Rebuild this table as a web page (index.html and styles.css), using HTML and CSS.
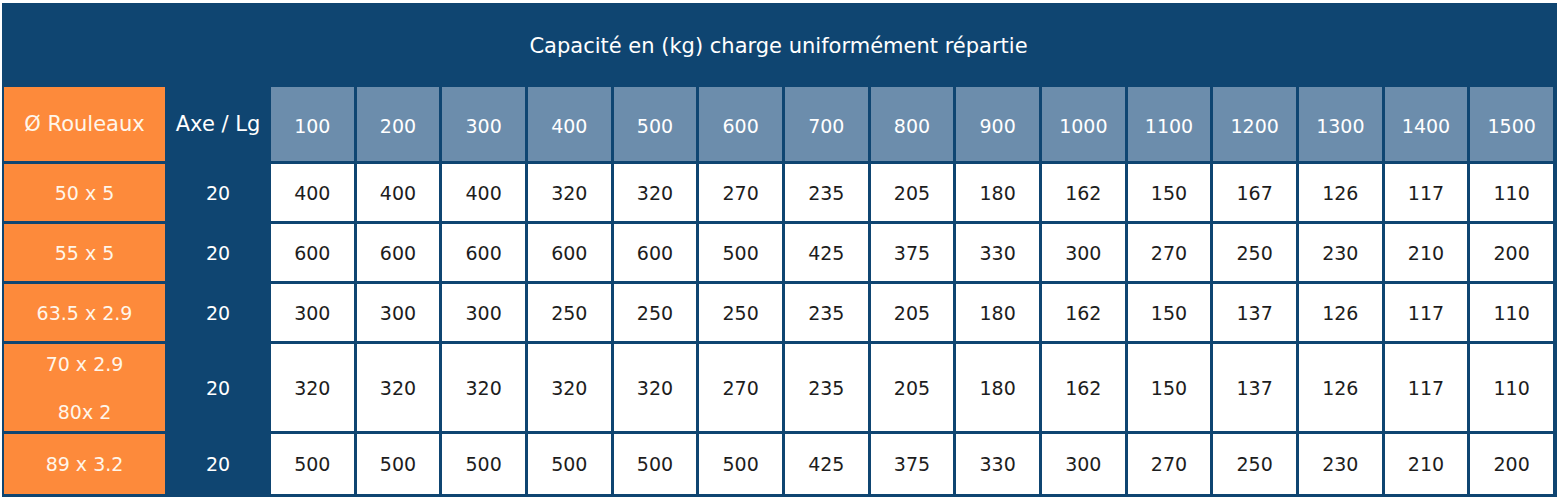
FILE: index.html
```html
<!DOCTYPE html>
<html lang="fr">
<head>
<meta charset="utf-8">
<title>Capacité</title>
<link rel="stylesheet" href="styles.css">
</head>
<body>
<div class="grid">
  <div class="title">Capacité en (kg) charge uniformément répartie</div>

  <div class="c or label">Ø Rouleaux</div><div class="c axe label">Axe / Lg</div>
  <div class="c hd">100</div><div class="c hd">200</div><div class="c hd">300</div><div class="c hd">400</div><div class="c hd">500</div><div class="c hd">600</div><div class="c hd">700</div><div class="c hd">800</div><div class="c hd">900</div><div class="c hd">1000</div><div class="c hd">1100</div><div class="c hd">1200</div><div class="c hd">1300</div><div class="c hd">1400</div><div class="c hd">1500</div>

  <div class="c or">50 x 5</div><div class="c axe">20</div>
  <div class="c v">400</div><div class="c v">400</div><div class="c v">400</div><div class="c v">320</div><div class="c v">320</div><div class="c v">270</div><div class="c v">235</div><div class="c v">205</div><div class="c v">180</div><div class="c v">162</div><div class="c v">150</div><div class="c v">167</div><div class="c v">126</div><div class="c v">117</div><div class="c v">110</div>

  <div class="c or">55 x 5</div><div class="c axe">20</div>
  <div class="c v">600</div><div class="c v">600</div><div class="c v">600</div><div class="c v">600</div><div class="c v">600</div><div class="c v">500</div><div class="c v">425</div><div class="c v">375</div><div class="c v">330</div><div class="c v">300</div><div class="c v">270</div><div class="c v">250</div><div class="c v">230</div><div class="c v">210</div><div class="c v">200</div>

  <div class="c or">63.5 x 2.9</div><div class="c axe">20</div>
  <div class="c v">300</div><div class="c v">300</div><div class="c v">300</div><div class="c v">250</div><div class="c v">250</div><div class="c v">250</div><div class="c v">235</div><div class="c v">205</div><div class="c v">180</div><div class="c v">162</div><div class="c v">150</div><div class="c v">137</div><div class="c v">126</div><div class="c v">117</div><div class="c v">110</div>

  <div class="c or two"><span>70 x 2.9</span><span>80x 2</span></div><div class="c axe">20</div>
  <div class="c v">320</div><div class="c v">320</div><div class="c v">320</div><div class="c v">320</div><div class="c v">320</div><div class="c v">270</div><div class="c v">235</div><div class="c v">205</div><div class="c v">180</div><div class="c v">162</div><div class="c v">150</div><div class="c v">137</div><div class="c v">126</div><div class="c v">117</div><div class="c v">110</div>

  <div class="c or">89 x 3.2</div><div class="c axe">20</div>
  <div class="c v">500</div><div class="c v">500</div><div class="c v">500</div><div class="c v">500</div><div class="c v">500</div><div class="c v">500</div><div class="c v">425</div><div class="c v">375</div><div class="c v">330</div><div class="c v">300</div><div class="c v">270</div><div class="c v">250</div><div class="c v">230</div><div class="c v">210</div><div class="c v">200</div>
</div>
</body>
</html>
```

FILE: styles.css
```css
html, body {
  margin: 0;
  padding: 0;
  background: #ffffff;
}
body {
  font-family: "DejaVu Sans", "Liberation Sans", sans-serif;
  font-size: 19px;
}
.grid {
  margin: 3px 0 0 2px;
  width: 1555px;
  box-sizing: border-box;
  padding: 0 4px 3px 2px;
  background: #0f4571;
  display: grid;
  grid-template-columns: 161px 100px repeat(15, 1fr);
  grid-template-rows: 81px 74px 57px 57px 57px 87px 60px;
  gap: 3px;
}
.title {
  grid-column: 1 / -1;
  color: #ffffff;
  font-size: 21px;
  display: flex;
  align-items: center;
  justify-content: center;
  padding-top: 5px;
}
.c {
  display: flex;
  align-items: center;
  justify-content: center;
}
.label {
  font-size: 21px;
}
.or {
  background: #fd8a3b;
  color: #fff6ea;
}
.axe {
  background: #0f4571;
  color: #ffffff;
}
.hd {
  background: #6c8dac;
  color: #ffffff;
  padding-top: 3px;
}
.v {
  background: #ffffff;
  color: #1d1d1d;
}
.two {
  flex-direction: column;
  gap: 26px;
}
```
